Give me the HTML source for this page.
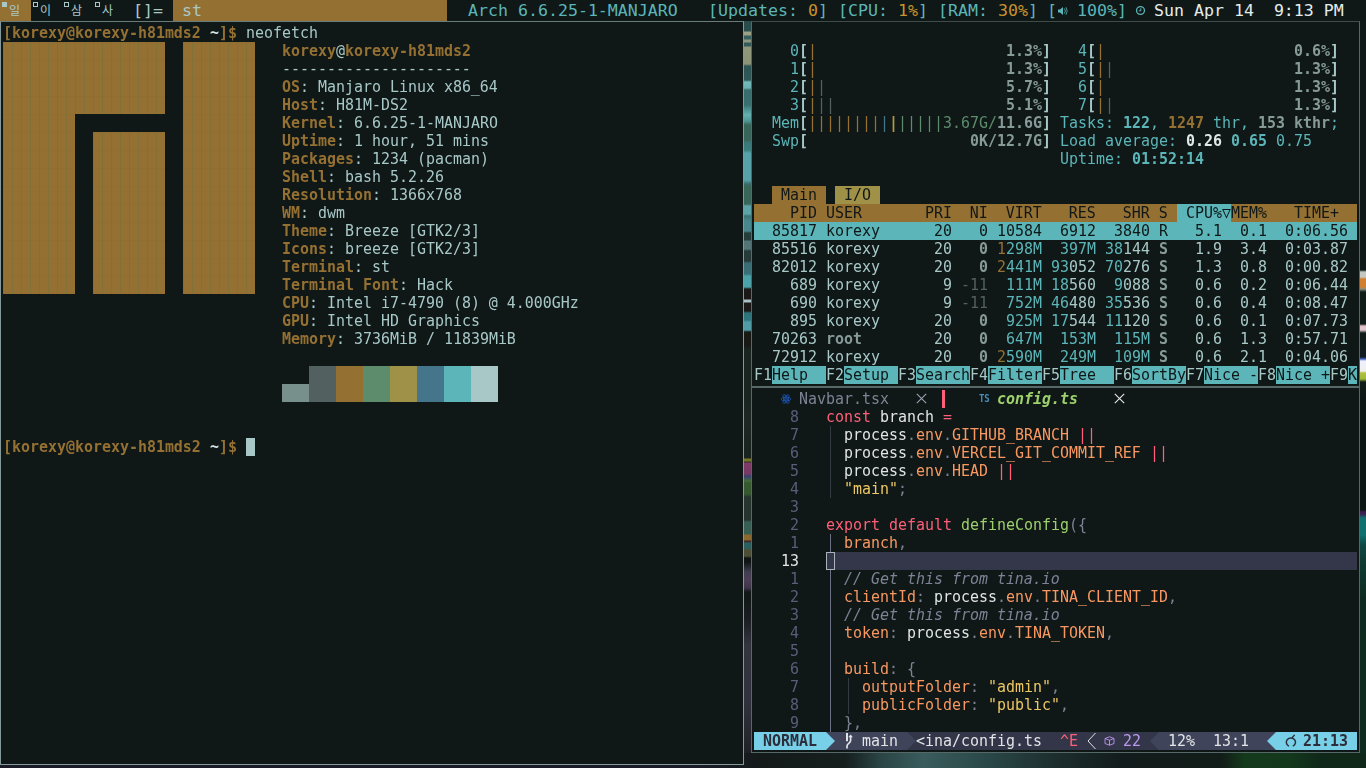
<!DOCTYPE html>
<html lang="en"><head><meta charset="utf-8"><title>dwm</title><style>
html,body{margin:0;padding:0}
body{width:1366px;height:768px;position:relative;overflow:hidden;background:#0f1817}
.b{position:absolute;box-sizing:content-box}
.t{position:absolute;height:18px;line-height:18px;font-family:"DejaVu Sans Mono","Liberation Mono",monospace;font-size:14.95px;white-space:pre;transform:scaleY(1.09);transform-origin:0 14.2px}
.s{position:absolute;top:-.5px;height:21px;line-height:21px;font-family:"DejaVu Sans Mono","Liberation Mono",monospace;font-size:16.6px;white-space:pre}
.k{position:absolute;top:3px;height:16px;line-height:16px;font-family:"Liberation Sans","Noto Sans CJK KR","NanumGothic",sans-serif;font-size:12px;white-space:pre}
.g{background:repeating-linear-gradient(90deg,rgba(70,115,70,.24) 0 1px,transparent 1px 9px),repeating-linear-gradient(180deg,rgba(60,90,60,.05) 0 1px,transparent 1px 18px)}
#wp{left:0;top:0;width:1366px;height:768px;background:#141c1c}
#bar{left:0;top:0;width:1366px;height:21px;background:#0f1817}
#wpgap{left:744px;top:21px;width:7px;height:747px;filter:brightness(.86) saturate(.85);background:linear-gradient(180deg,#2a5a5a 0px,#2a5c5c 10px,#b8bc98 11px,#b0b890 14px,#3a7070 15px,#3a7070 18px,#a0b090 19px,#a0b090 21px,#356a6a 22px,#356a6a 25px,#a8b088 26px,#a4ac84 43px,#2f6464 45px,#2f6868 59px,#7adcdc 61px,#70d0d0 67px,#3a8080 69px,#3a8484 84px,#45a0a0 87px,#6ad0d0 94px,#50b0b0 100px,#3a7868 104px,#3a7868 119px,#3a9090 122px,#3a9494 129px,#58c0c8 132px,#58c0c8 159px,#3a8080 163px,#3a7a68 165px,#3a7a68 183px,#60c0c8 185px,#60c0c8 193px,#3a8888 195px,#4aa0a8 200px,#4aa0a8 210px,#284848 212px,#284848 219px,#5a8888 220px,#5a8888 228px,#2a4444 230px,#2a4444 240px,#3a8088 242px,#3a8490 253px,#48c0c8 255px,#48c0c8 266px,#201c1a 268px,#201c1a 278px,#c0e0e8 279px,#c0e0e8 281px,#201c1a 282px,#201c1a 290px,#2a8890 292px,#2a8c98 299px,#50b8c8 301px,#50b8c8 309px,#1c1c18 311px,#1c1c18 324px,#1c2c28 329px,#1c2c28 379px,#222e2a 400px,#1c2a22 429px,#1c2a22 437px,#8a8a20 438px,#8a8a20 440px,#2a3a28 441px,#a04080 442px,#904078 453px,#404890 455px,#48803a 460px,#3a6a30 462px,#3a6a30 473px,#2a4034 476px,#2a4034 499px,#3a7060 501px,#3a7060 513px,#a87828 514px,#a87828 519px,#502020 520px,#2a7070 522px,#2a7070 527px,#5a5c38 529px,#5a5c38 535px,#101818 537px,#101818 541px,#4a4860 551px,#5a4868 559px,#4a3c58 567px,#141c1c 571px,#141c1c 579px,#20242c 600px,#3c3c4c 624px,#3a3a4a 679px,#2c2c38 719px,#1a1c24 747px)}
#wpright{left:1360px;top:21px;width:6px;height:747px;background:linear-gradient(180deg,#0f1a18 0px,#0f1a18 249px,#c0c8c0 251px,#c8c8c0 256px,#d08030 258px,#d08030 266px,#8a9080 268px,#101c18 271px,#101c18 303px,#e0c0c8 305px,#e0c8d0 309px,#101c18 312px,#101c20 336px,#4060c0 338px,#f0f0ff 340px,#f0f0f0 350px,#b0c040 352px,#a0b838 358px,#101c18 361px,#0c1614 379px,#0c1614 489px,#3a2050 491px,#3a2050 493px,#107070 497px,#107070 514px,#0f4844 524px,#0f3c34 539px,#0f2a20 579px,#0f2a1e 747px)}
#wpbottom{left:0;top:753px;width:1366px;height:15px;background:linear-gradient(90deg,#1a1c28 0px,#1a1c28 700px,#141a1a 760px,#161e1e 845px,#2a4444 880px,#3a5c5c 923px,#2c4a4a 980px,#1c2c2c 1061px,#131c1c 1120px,#121c18 1221px,#143a1c 1245px,#14381c 1290px,#10281a 1320px,#10281a 1366px)}
</style></head><body>
<div class="b" id="wp"></div>
<div class="b" id="wpgap"></div>
<div class="b" id="wpright"></div>
<div class="b" id="wpbottom"></div>
<div class="b" id="bar"></div>
<div class="b" style="left:0px;top:0px;width:31px;height:21px;background:#957033;"></div>
<div class="b" style="left:2px;top:2px;width:5px;height:5px;background:#a8c8c8;"></div>
<div class="b" style="left:33px;top:2px;width:3px;height:3px;border:1px solid #a8c8c8"></div>
<div class="b" style="left:64px;top:2px;width:3px;height:3px;border:1px solid #a8c8c8"></div>
<div class="b" style="left:95px;top:2px;width:3px;height:3px;border:1px solid #a8c8c8"></div>
<span class="k" style="left:9px;color:#a8c8c8">일</span>
<span class="k" style="left:40px;color:#a8c8c8">이</span>
<span class="k" style="left:71px;color:#a8c8c8">삼</span>
<span class="k" style="left:102px;color:#a8c8c8">사</span>
<span class="s" style="left:133px;color:#a8c8c8">[]=</span>
<div class="b" style="left:173px;top:0px;width:274px;height:21px;background:#957033;"></div>
<span class="s" style="left:182px;color:#a8c8c8">st</span>
<span class="s" style="left:468px;color:#5cb5b8">Arch 6.6.25-1-MANJARO</span>
<span class="s" style="left:708px;color:#5cb5b8">[Updates: </span>
<span class="s" style="left:808px;color:#c8922e">0</span>
<span class="s" style="left:818px;color:#5cb5b8">]</span>
<span class="s" style="left:838px;color:#5cb5b8">[CPU: </span>
<span class="s" style="left:898px;color:#c8922e">1%</span>
<span class="s" style="left:918px;color:#5cb5b8">]</span>
<span class="s" style="left:938px;color:#5cb5b8">[RAM: </span>
<span class="s" style="left:998px;color:#c8922e">30%</span>
<span class="s" style="left:1028px;color:#5cb5b8">]</span>
<span class="s" style="left:1047px;color:#5cb5b8">[</span>
<svg class="b" style="left:1057px;top:5px" width="11" height="12" viewBox="0 0 11 12"><path d="M1 4.5h2l3-2.5v8l-3-2.5h-2z" fill="#5cb5b8"/><path d="M7.5 3.5q1.6 2.5 0 5M9 2.2q2.4 3.8 0 7.6" stroke="#5cb5b8" stroke-width="1" fill="none" opacity=".8"/></svg>
<span class="s" style="left:1077px;color:#5cb5b8">100%]</span>
<svg class="b" style="left:1134.5px;top:5.3px" width="11" height="11" viewBox="0 0 11 11"><circle cx="5.5" cy="5.5" r="3.950" stroke="#5cb5b8" stroke-width="1.3" fill="none"/><path d="M5.800 3.200v2.600h-2" stroke="#5cb5b8" stroke-width="1" fill="none"/></svg>
<span class="s" style="left:1154px;color:#e4ecec">Sun Apr 14  9:13 PM</span>
<div class="b" style="left:0px;top:21px;width:742px;height:742px;border:1px solid #86999a;border-top-color:#687c7c;background:#0f1817"></div>
<div class="b" style="left:751px;top:21px;width:607px;height:364px;border:1px solid #566868;border-top-color:#3e4c4c;background:#0f1817"></div>
<div class="b" style="left:751px;top:387px;width:607px;height:364px;border:1px solid #566868;border-top-color:#566868;background:#0f1817"></div>
<span class="t" style="left:3px;top:24px;color:#957033;font-weight:bold;">[korexy@korexy-h81mds2</span>
<span class="t" style="left:210px;top:24px;color:#d4e4e4;font-weight:bold;">~</span>
<span class="t" style="left:219px;top:24px;color:#957033;font-weight:bold;">]$</span>
<span class="t" style="left:246px;top:24px;color:#a8c8c8;">neofetch</span>
<div class="b" style="left:3px;top:42px;width:162px;height:18px;background:#957033;"></div>
<span class="t" style="left:3px;top:42px;color:#957033;transform:none;overflow:hidden;">██████████████████</span>
<div class="b" style="left:183px;top:42px;width:72px;height:18px;background:#957033;"></div>
<span class="t" style="left:183px;top:42px;color:#957033;transform:none;overflow:hidden;">████████</span>
<div class="b" style="left:3px;top:60px;width:162px;height:18px;background:#957033;"></div>
<span class="t" style="left:3px;top:60px;color:#957033;transform:none;overflow:hidden;">██████████████████</span>
<div class="b" style="left:183px;top:60px;width:72px;height:18px;background:#957033;"></div>
<span class="t" style="left:183px;top:60px;color:#957033;transform:none;overflow:hidden;">████████</span>
<div class="b" style="left:3px;top:78px;width:162px;height:18px;background:#957033;"></div>
<span class="t" style="left:3px;top:78px;color:#957033;transform:none;overflow:hidden;">██████████████████</span>
<div class="b" style="left:183px;top:78px;width:72px;height:18px;background:#957033;"></div>
<span class="t" style="left:183px;top:78px;color:#957033;transform:none;overflow:hidden;">████████</span>
<div class="b" style="left:3px;top:96px;width:162px;height:18px;background:#957033;"></div>
<span class="t" style="left:3px;top:96px;color:#957033;transform:none;overflow:hidden;">██████████████████</span>
<div class="b" style="left:183px;top:96px;width:72px;height:18px;background:#957033;"></div>
<span class="t" style="left:183px;top:96px;color:#957033;transform:none;overflow:hidden;">████████</span>
<div class="b" style="left:3px;top:114px;width:72px;height:18px;background:#957033;"></div>
<span class="t" style="left:3px;top:114px;color:#957033;transform:none;overflow:hidden;">████████</span>
<div class="b" style="left:183px;top:114px;width:72px;height:18px;background:#957033;"></div>
<span class="t" style="left:183px;top:114px;color:#957033;transform:none;overflow:hidden;">████████</span>
<div class="b" style="left:3px;top:132px;width:72px;height:18px;background:#957033;"></div>
<span class="t" style="left:3px;top:132px;color:#957033;transform:none;overflow:hidden;">████████</span>
<div class="b" style="left:93px;top:132px;width:72px;height:18px;background:#957033;"></div>
<span class="t" style="left:93px;top:132px;color:#957033;transform:none;overflow:hidden;">████████</span>
<div class="b" style="left:183px;top:132px;width:72px;height:18px;background:#957033;"></div>
<span class="t" style="left:183px;top:132px;color:#957033;transform:none;overflow:hidden;">████████</span>
<div class="b" style="left:3px;top:150px;width:72px;height:18px;background:#957033;"></div>
<span class="t" style="left:3px;top:150px;color:#957033;transform:none;overflow:hidden;">████████</span>
<div class="b" style="left:93px;top:150px;width:72px;height:18px;background:#957033;"></div>
<span class="t" style="left:93px;top:150px;color:#957033;transform:none;overflow:hidden;">████████</span>
<div class="b" style="left:183px;top:150px;width:72px;height:18px;background:#957033;"></div>
<span class="t" style="left:183px;top:150px;color:#957033;transform:none;overflow:hidden;">████████</span>
<div class="b" style="left:3px;top:168px;width:72px;height:18px;background:#957033;"></div>
<span class="t" style="left:3px;top:168px;color:#957033;transform:none;overflow:hidden;">████████</span>
<div class="b" style="left:93px;top:168px;width:72px;height:18px;background:#957033;"></div>
<span class="t" style="left:93px;top:168px;color:#957033;transform:none;overflow:hidden;">████████</span>
<div class="b" style="left:183px;top:168px;width:72px;height:18px;background:#957033;"></div>
<span class="t" style="left:183px;top:168px;color:#957033;transform:none;overflow:hidden;">████████</span>
<div class="b" style="left:3px;top:186px;width:72px;height:18px;background:#957033;"></div>
<span class="t" style="left:3px;top:186px;color:#957033;transform:none;overflow:hidden;">████████</span>
<div class="b" style="left:93px;top:186px;width:72px;height:18px;background:#957033;"></div>
<span class="t" style="left:93px;top:186px;color:#957033;transform:none;overflow:hidden;">████████</span>
<div class="b" style="left:183px;top:186px;width:72px;height:18px;background:#957033;"></div>
<span class="t" style="left:183px;top:186px;color:#957033;transform:none;overflow:hidden;">████████</span>
<div class="b" style="left:3px;top:204px;width:72px;height:18px;background:#957033;"></div>
<span class="t" style="left:3px;top:204px;color:#957033;transform:none;overflow:hidden;">████████</span>
<div class="b" style="left:93px;top:204px;width:72px;height:18px;background:#957033;"></div>
<span class="t" style="left:93px;top:204px;color:#957033;transform:none;overflow:hidden;">████████</span>
<div class="b" style="left:183px;top:204px;width:72px;height:18px;background:#957033;"></div>
<span class="t" style="left:183px;top:204px;color:#957033;transform:none;overflow:hidden;">████████</span>
<div class="b" style="left:3px;top:222px;width:72px;height:18px;background:#957033;"></div>
<span class="t" style="left:3px;top:222px;color:#957033;transform:none;overflow:hidden;">████████</span>
<div class="b" style="left:93px;top:222px;width:72px;height:18px;background:#957033;"></div>
<span class="t" style="left:93px;top:222px;color:#957033;transform:none;overflow:hidden;">████████</span>
<div class="b" style="left:183px;top:222px;width:72px;height:18px;background:#957033;"></div>
<span class="t" style="left:183px;top:222px;color:#957033;transform:none;overflow:hidden;">████████</span>
<div class="b" style="left:3px;top:240px;width:72px;height:18px;background:#957033;"></div>
<span class="t" style="left:3px;top:240px;color:#957033;transform:none;overflow:hidden;">████████</span>
<div class="b" style="left:93px;top:240px;width:72px;height:18px;background:#957033;"></div>
<span class="t" style="left:93px;top:240px;color:#957033;transform:none;overflow:hidden;">████████</span>
<div class="b" style="left:183px;top:240px;width:72px;height:18px;background:#957033;"></div>
<span class="t" style="left:183px;top:240px;color:#957033;transform:none;overflow:hidden;">████████</span>
<div class="b" style="left:3px;top:258px;width:72px;height:18px;background:#957033;"></div>
<span class="t" style="left:3px;top:258px;color:#957033;transform:none;overflow:hidden;">████████</span>
<div class="b" style="left:93px;top:258px;width:72px;height:18px;background:#957033;"></div>
<span class="t" style="left:93px;top:258px;color:#957033;transform:none;overflow:hidden;">████████</span>
<div class="b" style="left:183px;top:258px;width:72px;height:18px;background:#957033;"></div>
<span class="t" style="left:183px;top:258px;color:#957033;transform:none;overflow:hidden;">████████</span>
<div class="b" style="left:3px;top:276px;width:72px;height:18px;background:#957033;"></div>
<span class="t" style="left:3px;top:276px;color:#957033;transform:none;overflow:hidden;">████████</span>
<div class="b" style="left:93px;top:276px;width:72px;height:18px;background:#957033;"></div>
<span class="t" style="left:93px;top:276px;color:#957033;transform:none;overflow:hidden;">████████</span>
<div class="b" style="left:183px;top:276px;width:72px;height:18px;background:#957033;"></div>
<span class="t" style="left:183px;top:276px;color:#957033;transform:none;overflow:hidden;">████████</span>
<div class="b g" style="left:3px;top:42px;width:162px;height:72px"></div>
<div class="b g" style="left:3px;top:114px;width:72px;height:180px"></div>
<div class="b g" style="left:93px;top:132px;width:72px;height:162px"></div>
<div class="b g" style="left:183px;top:42px;width:72px;height:252px"></div>
<span class="t" style="left:282px;top:42px;color:#957033;font-weight:bold;">korexy</span>
<span class="t" style="left:336px;top:42px;color:#a8c8c8;">@</span>
<span class="t" style="left:345px;top:42px;color:#957033;font-weight:bold;">korexy-h81mds2</span>
<span class="t" style="left:282px;top:60px;color:#a8c8c8;">---------------------</span>
<span class="t" style="left:282px;top:78px;color:#957033;font-weight:bold;">OS</span>
<span class="t" style="left:300px;top:78px;color:#a8c8c8;">: Manjaro Linux x86_64</span>
<span class="t" style="left:282px;top:96px;color:#957033;font-weight:bold;">Host</span>
<span class="t" style="left:318px;top:96px;color:#a8c8c8;">: H81M-DS2</span>
<span class="t" style="left:282px;top:114px;color:#957033;font-weight:bold;">Kernel</span>
<span class="t" style="left:336px;top:114px;color:#a8c8c8;">: 6.6.25-1-MANJARO</span>
<span class="t" style="left:282px;top:132px;color:#957033;font-weight:bold;">Uptime</span>
<span class="t" style="left:336px;top:132px;color:#a8c8c8;">: 1 hour, 51 mins</span>
<span class="t" style="left:282px;top:150px;color:#957033;font-weight:bold;">Packages</span>
<span class="t" style="left:354px;top:150px;color:#a8c8c8;">: 1234 (pacman)</span>
<span class="t" style="left:282px;top:168px;color:#957033;font-weight:bold;">Shell</span>
<span class="t" style="left:327px;top:168px;color:#a8c8c8;">: bash 5.2.26</span>
<span class="t" style="left:282px;top:186px;color:#957033;font-weight:bold;">Resolution</span>
<span class="t" style="left:372px;top:186px;color:#a8c8c8;">: 1366x768</span>
<span class="t" style="left:282px;top:204px;color:#957033;font-weight:bold;">WM</span>
<span class="t" style="left:300px;top:204px;color:#a8c8c8;">: dwm</span>
<span class="t" style="left:282px;top:222px;color:#957033;font-weight:bold;">Theme</span>
<span class="t" style="left:327px;top:222px;color:#a8c8c8;">: Breeze [GTK2/3]</span>
<span class="t" style="left:282px;top:240px;color:#957033;font-weight:bold;">Icons</span>
<span class="t" style="left:327px;top:240px;color:#a8c8c8;">: breeze [GTK2/3]</span>
<span class="t" style="left:282px;top:258px;color:#957033;font-weight:bold;">Terminal</span>
<span class="t" style="left:354px;top:258px;color:#a8c8c8;">: st</span>
<span class="t" style="left:282px;top:276px;color:#957033;font-weight:bold;">Terminal Font</span>
<span class="t" style="left:399px;top:276px;color:#a8c8c8;">: Hack</span>
<span class="t" style="left:282px;top:294px;color:#957033;font-weight:bold;">CPU</span>
<span class="t" style="left:309px;top:294px;color:#a8c8c8;">: Intel i7-4790 (8) @ 4.000GHz</span>
<span class="t" style="left:282px;top:312px;color:#957033;font-weight:bold;">GPU</span>
<span class="t" style="left:309px;top:312px;color:#a8c8c8;">: Intel HD Graphics</span>
<span class="t" style="left:282px;top:330px;color:#957033;font-weight:bold;">Memory</span>
<span class="t" style="left:336px;top:330px;color:#a8c8c8;">: 3736MiB / 11839MiB</span>
<div class="b" style="left:309px;top:366px;width:27px;height:36px;background:#52605f;"></div>
<div class="b" style="left:336px;top:366px;width:27px;height:36px;background:#957033;"></div>
<div class="b" style="left:363px;top:366px;width:27px;height:36px;background:#5c8c6c;"></div>
<div class="b" style="left:390px;top:366px;width:27px;height:36px;background:#a09148;"></div>
<div class="b" style="left:417px;top:366px;width:27px;height:36px;background:#44758a;"></div>
<div class="b" style="left:444px;top:366px;width:27px;height:36px;background:#5cb5b8;"></div>
<div class="b" style="left:471px;top:366px;width:27px;height:36px;background:#a8c8c8;"></div>
<div class="b" style="left:282px;top:384px;width:27px;height:18px;background:#78908c;"></div>
<span class="t" style="left:3px;top:438px;color:#957033;font-weight:bold;">[korexy@korexy-h81mds2</span>
<span class="t" style="left:210px;top:438px;color:#d4e4e4;font-weight:bold;">~</span>
<span class="t" style="left:219px;top:438px;color:#957033;font-weight:bold;">]$</span>
<div class="b" style="left:246px;top:438px;width:9px;height:18px;background:#a8c8c8;"></div>
<span class="t" style="left:790px;top:42px;color:#5cb5b8;">0</span>
<span class="t" style="left:799px;top:42px;color:#a8c8c8;font-weight:bold;">[</span>
<span class="t" style="left:808px;top:42px;color:#957033;">|</span>
<span class="t" style="left:1006px;top:42px;color:#869a98;font-weight:bold;">1.3%</span>
<span class="t" style="left:1042px;top:42px;color:#a8c8c8;font-weight:bold;">]</span>
<span class="t" style="left:790px;top:60px;color:#5cb5b8;">1</span>
<span class="t" style="left:799px;top:60px;color:#a8c8c8;font-weight:bold;">[</span>
<span class="t" style="left:808px;top:60px;color:#957033;">|</span>
<span class="t" style="left:1006px;top:60px;color:#869a98;font-weight:bold;">1.3%</span>
<span class="t" style="left:1042px;top:60px;color:#a8c8c8;font-weight:bold;">]</span>
<span class="t" style="left:790px;top:78px;color:#5cb5b8;">2</span>
<span class="t" style="left:799px;top:78px;color:#a8c8c8;font-weight:bold;">[</span>
<span class="t" style="left:808px;top:78px;color:#957033;">|</span>
<span class="t" style="left:817px;top:78px;color:#52605f;">|</span>
<span class="t" style="left:1006px;top:78px;color:#869a98;font-weight:bold;">5.7%</span>
<span class="t" style="left:1042px;top:78px;color:#a8c8c8;font-weight:bold;">]</span>
<span class="t" style="left:790px;top:96px;color:#5cb5b8;">3</span>
<span class="t" style="left:799px;top:96px;color:#a8c8c8;font-weight:bold;">[</span>
<span class="t" style="left:808px;top:96px;color:#957033;">|</span>
<span class="t" style="left:817px;top:96px;color:#52605f;">|</span>
<span class="t" style="left:826px;top:96px;color:#52605f;">|</span>
<span class="t" style="left:1006px;top:96px;color:#869a98;font-weight:bold;">5.1%</span>
<span class="t" style="left:1042px;top:96px;color:#a8c8c8;font-weight:bold;">]</span>
<span class="t" style="left:1078px;top:42px;color:#5cb5b8;">4</span>
<span class="t" style="left:1087px;top:42px;color:#a8c8c8;font-weight:bold;">[</span>
<span class="t" style="left:1096px;top:42px;color:#957033;">|</span>
<span class="t" style="left:1294px;top:42px;color:#869a98;font-weight:bold;">0.6%</span>
<span class="t" style="left:1330px;top:42px;color:#a8c8c8;font-weight:bold;">]</span>
<span class="t" style="left:1078px;top:60px;color:#5cb5b8;">5</span>
<span class="t" style="left:1087px;top:60px;color:#a8c8c8;font-weight:bold;">[</span>
<span class="t" style="left:1096px;top:60px;color:#957033;">|</span>
<span class="t" style="left:1105px;top:60px;color:#52605f;">|</span>
<span class="t" style="left:1294px;top:60px;color:#869a98;font-weight:bold;">1.3%</span>
<span class="t" style="left:1330px;top:60px;color:#a8c8c8;font-weight:bold;">]</span>
<span class="t" style="left:1078px;top:78px;color:#5cb5b8;">6</span>
<span class="t" style="left:1087px;top:78px;color:#a8c8c8;font-weight:bold;">[</span>
<span class="t" style="left:1096px;top:78px;color:#957033;">|</span>
<span class="t" style="left:1294px;top:78px;color:#869a98;font-weight:bold;">1.3%</span>
<span class="t" style="left:1330px;top:78px;color:#a8c8c8;font-weight:bold;">]</span>
<span class="t" style="left:1078px;top:96px;color:#5cb5b8;">7</span>
<span class="t" style="left:1087px;top:96px;color:#a8c8c8;font-weight:bold;">[</span>
<span class="t" style="left:1096px;top:96px;color:#957033;">|</span>
<span class="t" style="left:1105px;top:96px;color:#52605f;">|</span>
<span class="t" style="left:1294px;top:96px;color:#869a98;font-weight:bold;">1.3%</span>
<span class="t" style="left:1330px;top:96px;color:#a8c8c8;font-weight:bold;">]</span>
<span class="t" style="left:772px;top:114px;color:#5cb5b8;">Mem</span>
<span class="t" style="left:799px;top:114px;color:#a8c8c8;font-weight:bold;">[</span>
<span class="t" style="left:808px;top:114px;color:#957033;">||||||||</span>
<span class="t" style="left:880px;top:114px;color:#44758a;">|</span>
<span class="t" style="left:889px;top:114px;color:#b09a40;font-weight:bold;">|</span>
<span class="t" style="left:898px;top:114px;color:#5c8c6c;">|||||</span>
<span class="t" style="left:943px;top:114px;color:#5c8c6c;">3.67G/</span>
<span class="t" style="left:997px;top:114px;color:#869a98;font-weight:bold;">11.6G</span>
<span class="t" style="left:1042px;top:114px;color:#a8c8c8;font-weight:bold;">]</span>
<span class="t" style="left:772px;top:132px;color:#5cb5b8;">Swp</span>
<span class="t" style="left:799px;top:132px;color:#a8c8c8;font-weight:bold;">[</span>
<span class="t" style="left:970px;top:132px;color:#869a98;font-weight:bold;">0K/12.7G</span>
<span class="t" style="left:1042px;top:132px;color:#a8c8c8;font-weight:bold;">]</span>
<span class="t" style="left:1060px;top:114px;color:#5cb5b8;">Tasks:</span>
<span class="t" style="left:1123px;top:114px;color:#5cb5b8;font-weight:bold;">122</span>
<span class="t" style="left:1150px;top:114px;color:#5cb5b8;">,</span>
<span class="t" style="left:1168px;top:114px;color:#957033;font-weight:bold;">1247</span>
<span class="t" style="left:1213px;top:114px;color:#5cb5b8;">thr,</span>
<span class="t" style="left:1258px;top:114px;color:#869a98;font-weight:bold;">153</span>
<span class="t" style="left:1294px;top:114px;color:#869a98;font-weight:bold;">kthr</span>
<span class="t" style="left:1330px;top:114px;color:#5cb5b8;">;</span>
<span class="t" style="left:1060px;top:132px;color:#5cb5b8;">Load average:</span>
<span class="t" style="left:1186px;top:132px;color:#dfe8e8;font-weight:bold;">0.26</span>
<span class="t" style="left:1231px;top:132px;color:#5cb5b8;font-weight:bold;">0.65</span>
<span class="t" style="left:1276px;top:132px;color:#5cb5b8;">0.75</span>
<span class="t" style="left:1060px;top:150px;color:#5cb5b8;">Uptime:</span>
<span class="t" style="left:1132px;top:150px;color:#5cb5b8;font-weight:bold;">01:52:14</span>
<div class="b" style="left:772px;top:186px;width:54px;height:18px;background:#957033;"></div>
<span class="t" style="left:781px;top:186px;color:#0f1817;">Main</span>
<div class="b" style="left:835px;top:186px;width:45px;height:18px;background:#a09148;"></div>
<span class="t" style="left:844px;top:186px;color:#0f1817;">I/O</span>
<div class="b" style="left:754px;top:204px;width:603px;height:18px;background:#957033;"></div>
<span class="t" style="left:790px;top:204px;color:#0f1817;">PID USER       PRI  NI  VIRT   RES   SHR S</span>
<div class="b" style="left:1177px;top:204px;width:54px;height:18px;background:#5cb5b8;"></div>
<span class="t" style="left:1186px;top:204px;color:#0f1817;">CPU%▽</span>
<span class="t" style="left:1231px;top:204px;color:#0f1817;">MEM%   TIME+</span>
<div class="b" style="left:754px;top:222px;width:603px;height:18px;background:#5cb5b8;"></div>
<span class="t" style="left:772px;top:222px;color:#0f1817;">85817</span>
<span class="t" style="left:826px;top:222px;color:#0f1817;">korexy</span>
<span class="t" style="left:934px;top:222px;color:#0f1817;">20</span>
<span class="t" style="left:979px;top:222px;color:#0f1817;">0</span>
<span class="t" style="left:997px;top:222px;color:#0f1817;">10584</span>
<span class="t" style="left:1060px;top:222px;color:#0f1817;">6912</span>
<span class="t" style="left:1114px;top:222px;color:#0f1817;">3840</span>
<span class="t" style="left:1159px;top:222px;color:#0f1817;">R</span>
<span class="t" style="left:1195px;top:222px;color:#0f1817;">5.1</span>
<span class="t" style="left:1240px;top:222px;color:#0f1817;">0.1</span>
<span class="t" style="left:1285px;top:222px;color:#0f1817;">0:06.56</span>
<span class="t" style="left:772px;top:240px;color:#a8c8c8;">85516</span>
<span class="t" style="left:826px;top:240px;color:#a8c8c8;">korexy</span>
<span class="t" style="left:934px;top:240px;color:#a8c8c8;">20</span>
<span class="t" style="left:979px;top:240px;color:#869a98;font-weight:bold;">0</span>
<span class="t" style="left:997px;top:240px;color:#957033;">1</span>
<span class="t" style="left:1006px;top:240px;color:#5cb5b8;">298M</span>
<span class="t" style="left:1060px;top:240px;color:#5cb5b8;">397M</span>
<span class="t" style="left:1105px;top:240px;color:#5cb5b8;">38</span>
<span class="t" style="left:1123px;top:240px;color:#a8c8c8;">144</span>
<span class="t" style="left:1159px;top:240px;color:#869a98;font-weight:bold;">S</span>
<span class="t" style="left:1195px;top:240px;color:#a8c8c8;">1.9</span>
<span class="t" style="left:1240px;top:240px;color:#a8c8c8;">3.4</span>
<span class="t" style="left:1285px;top:240px;color:#a8c8c8;">0:03.87</span>
<span class="t" style="left:772px;top:258px;color:#a8c8c8;">82012</span>
<span class="t" style="left:826px;top:258px;color:#a8c8c8;">korexy</span>
<span class="t" style="left:934px;top:258px;color:#a8c8c8;">20</span>
<span class="t" style="left:979px;top:258px;color:#869a98;font-weight:bold;">0</span>
<span class="t" style="left:997px;top:258px;color:#957033;">2</span>
<span class="t" style="left:1006px;top:258px;color:#5cb5b8;">441M</span>
<span class="t" style="left:1051px;top:258px;color:#5cb5b8;">93</span>
<span class="t" style="left:1069px;top:258px;color:#a8c8c8;">052</span>
<span class="t" style="left:1105px;top:258px;color:#5cb5b8;">70</span>
<span class="t" style="left:1123px;top:258px;color:#a8c8c8;">276</span>
<span class="t" style="left:1159px;top:258px;color:#869a98;font-weight:bold;">S</span>
<span class="t" style="left:1195px;top:258px;color:#a8c8c8;">1.3</span>
<span class="t" style="left:1240px;top:258px;color:#a8c8c8;">0.8</span>
<span class="t" style="left:1285px;top:258px;color:#a8c8c8;">0:00.82</span>
<span class="t" style="left:790px;top:276px;color:#a8c8c8;">689</span>
<span class="t" style="left:826px;top:276px;color:#a8c8c8;">korexy</span>
<span class="t" style="left:943px;top:276px;color:#a8c8c8;">9</span>
<span class="t" style="left:961px;top:276px;color:#52605f;">-11</span>
<span class="t" style="left:1006px;top:276px;color:#5cb5b8;">111M</span>
<span class="t" style="left:1051px;top:276px;color:#5cb5b8;">18</span>
<span class="t" style="left:1069px;top:276px;color:#a8c8c8;">560</span>
<span class="t" style="left:1114px;top:276px;color:#5cb5b8;">9</span>
<span class="t" style="left:1123px;top:276px;color:#a8c8c8;">088</span>
<span class="t" style="left:1159px;top:276px;color:#869a98;font-weight:bold;">S</span>
<span class="t" style="left:1195px;top:276px;color:#a8c8c8;">0.6</span>
<span class="t" style="left:1240px;top:276px;color:#a8c8c8;">0.2</span>
<span class="t" style="left:1285px;top:276px;color:#a8c8c8;">0:06.44</span>
<span class="t" style="left:790px;top:294px;color:#a8c8c8;">690</span>
<span class="t" style="left:826px;top:294px;color:#a8c8c8;">korexy</span>
<span class="t" style="left:943px;top:294px;color:#a8c8c8;">9</span>
<span class="t" style="left:961px;top:294px;color:#52605f;">-11</span>
<span class="t" style="left:1006px;top:294px;color:#5cb5b8;">752M</span>
<span class="t" style="left:1051px;top:294px;color:#5cb5b8;">46</span>
<span class="t" style="left:1069px;top:294px;color:#a8c8c8;">480</span>
<span class="t" style="left:1105px;top:294px;color:#5cb5b8;">35</span>
<span class="t" style="left:1123px;top:294px;color:#a8c8c8;">536</span>
<span class="t" style="left:1159px;top:294px;color:#869a98;font-weight:bold;">S</span>
<span class="t" style="left:1195px;top:294px;color:#a8c8c8;">0.6</span>
<span class="t" style="left:1240px;top:294px;color:#a8c8c8;">0.4</span>
<span class="t" style="left:1285px;top:294px;color:#a8c8c8;">0:08.47</span>
<span class="t" style="left:790px;top:312px;color:#a8c8c8;">895</span>
<span class="t" style="left:826px;top:312px;color:#a8c8c8;">korexy</span>
<span class="t" style="left:934px;top:312px;color:#a8c8c8;">20</span>
<span class="t" style="left:979px;top:312px;color:#869a98;font-weight:bold;">0</span>
<span class="t" style="left:1006px;top:312px;color:#5cb5b8;">925M</span>
<span class="t" style="left:1051px;top:312px;color:#5cb5b8;">17</span>
<span class="t" style="left:1069px;top:312px;color:#a8c8c8;">544</span>
<span class="t" style="left:1105px;top:312px;color:#5cb5b8;">11</span>
<span class="t" style="left:1123px;top:312px;color:#a8c8c8;">120</span>
<span class="t" style="left:1159px;top:312px;color:#869a98;font-weight:bold;">S</span>
<span class="t" style="left:1195px;top:312px;color:#a8c8c8;">0.6</span>
<span class="t" style="left:1240px;top:312px;color:#a8c8c8;">0.1</span>
<span class="t" style="left:1285px;top:312px;color:#a8c8c8;">0:07.73</span>
<span class="t" style="left:772px;top:330px;color:#a8c8c8;">70263</span>
<span class="t" style="left:826px;top:330px;color:#869a98;font-weight:bold;">root</span>
<span class="t" style="left:934px;top:330px;color:#a8c8c8;">20</span>
<span class="t" style="left:979px;top:330px;color:#869a98;font-weight:bold;">0</span>
<span class="t" style="left:1006px;top:330px;color:#5cb5b8;">647M</span>
<span class="t" style="left:1060px;top:330px;color:#5cb5b8;">153M</span>
<span class="t" style="left:1114px;top:330px;color:#5cb5b8;">115M</span>
<span class="t" style="left:1159px;top:330px;color:#869a98;font-weight:bold;">S</span>
<span class="t" style="left:1195px;top:330px;color:#a8c8c8;">0.6</span>
<span class="t" style="left:1240px;top:330px;color:#a8c8c8;">1.3</span>
<span class="t" style="left:1285px;top:330px;color:#a8c8c8;">0:57.71</span>
<span class="t" style="left:772px;top:348px;color:#a8c8c8;">72912</span>
<span class="t" style="left:826px;top:348px;color:#a8c8c8;">korexy</span>
<span class="t" style="left:934px;top:348px;color:#a8c8c8;">20</span>
<span class="t" style="left:979px;top:348px;color:#869a98;font-weight:bold;">0</span>
<span class="t" style="left:997px;top:348px;color:#957033;">2</span>
<span class="t" style="left:1006px;top:348px;color:#5cb5b8;">590M</span>
<span class="t" style="left:1060px;top:348px;color:#5cb5b8;">249M</span>
<span class="t" style="left:1114px;top:348px;color:#5cb5b8;">109M</span>
<span class="t" style="left:1159px;top:348px;color:#869a98;font-weight:bold;">S</span>
<span class="t" style="left:1195px;top:348px;color:#a8c8c8;">0.6</span>
<span class="t" style="left:1240px;top:348px;color:#a8c8c8;">2.1</span>
<span class="t" style="left:1285px;top:348px;color:#a8c8c8;">0:04.06</span>
<span class="t" style="left:754px;top:366px;color:#a8c8c8;">F1</span>
<div class="b" style="left:772px;top:366px;width:54px;height:18px;background:#5cb5b8;"></div>
<span class="t" style="left:772px;top:366px;color:#0f1817;">Help</span>
<span class="t" style="left:826px;top:366px;color:#a8c8c8;">F2</span>
<div class="b" style="left:844px;top:366px;width:54px;height:18px;background:#5cb5b8;"></div>
<span class="t" style="left:844px;top:366px;color:#0f1817;">Setup</span>
<span class="t" style="left:898px;top:366px;color:#a8c8c8;">F3</span>
<div class="b" style="left:916px;top:366px;width:54px;height:18px;background:#5cb5b8;"></div>
<span class="t" style="left:916px;top:366px;color:#0f1817;">Search</span>
<span class="t" style="left:970px;top:366px;color:#a8c8c8;">F4</span>
<div class="b" style="left:988px;top:366px;width:54px;height:18px;background:#5cb5b8;"></div>
<span class="t" style="left:988px;top:366px;color:#0f1817;">Filter</span>
<span class="t" style="left:1042px;top:366px;color:#a8c8c8;">F5</span>
<div class="b" style="left:1060px;top:366px;width:54px;height:18px;background:#5cb5b8;"></div>
<span class="t" style="left:1060px;top:366px;color:#0f1817;">Tree</span>
<span class="t" style="left:1114px;top:366px;color:#a8c8c8;">F6</span>
<div class="b" style="left:1132px;top:366px;width:54px;height:18px;background:#5cb5b8;"></div>
<span class="t" style="left:1132px;top:366px;color:#0f1817;">SortBy</span>
<span class="t" style="left:1186px;top:366px;color:#a8c8c8;">F7</span>
<div class="b" style="left:1204px;top:366px;width:54px;height:18px;background:#5cb5b8;"></div>
<span class="t" style="left:1204px;top:366px;color:#0f1817;">Nice -</span>
<span class="t" style="left:1258px;top:366px;color:#a8c8c8;">F8</span>
<div class="b" style="left:1276px;top:366px;width:54px;height:18px;background:#5cb5b8;"></div>
<span class="t" style="left:1276px;top:366px;color:#0f1817;">Nice +</span>
<span class="t" style="left:1330px;top:366px;color:#a8c8c8;">F9</span>
<div class="b" style="left:1348px;top:366px;width:9px;height:18px;background:#5cb5b8;"></div>
<span class="t" style="left:1348px;top:366px;color:#0f1817;">K</span>
<svg class="b" style="left:780px;top:393px" width="12" height="12" viewBox="0 0 12 12" fill="none" stroke="#1d58bd" stroke-width=".75"><ellipse cx="6" cy="6" rx="4.900" ry="1.850"/><ellipse cx="6" cy="6" rx="4.900" ry="1.850" transform="rotate(60 6 6)"/><ellipse cx="6" cy="6" rx="4.900" ry="1.850" transform="rotate(120 6 6)"/><circle cx="6" cy="6" r=".8" fill="#2a6ad8" stroke="none"/></svg>
<span class="t" style="left:799px;top:390px;color:#7e8294;">Navbar.tsx</span>
<svg class="b" style="left:916px;top:393px" width="11" height="11" viewBox="0 0 11 11"><path d="M.8 .8l9.4 9.4M10.2 .8L.8 10.2" stroke="#9aa0b0" stroke-width="1.1"/></svg>
<svg class="b" style="left:1114px;top:393px" width="11" height="11" viewBox="0 0 11 11"><path d="M.8 .8l9.4 9.4M10.2 .8L.8 10.2" stroke="#e8e8e8" stroke-width="1.1"/></svg>
<div class="b" style="left:942px;top:390px;width:3px;height:18px;background:#ff5f78;"></div>
<span class="t" style="left:979px;top:390px;color:#4a90be;font-size:9px;font-weight:bold;letter-spacing:-.2px">TS</span>
<span class="t" style="left:997px;top:390px;color:#9ed06c;font-weight:bold;font-style:italic;">config.ts</span>
<span class="t" style="left:790px;top:408px;color:#5a5e7a;">8</span>
<span class="t" style="left:826px;top:408px;color:#ff5f78;">const</span>
<span class="t" style="left:880px;top:408px;color:#e1e3e4;">branch</span>
<span class="t" style="left:943px;top:408px;color:#ff5f78;">=</span>
<span class="t" style="left:790px;top:426px;color:#5a5e7a;">7</span>
<div class="b" style="left:830px;top:426px;width:1px;height:18px;background:#353b45;"></div>
<span class="t" style="left:844px;top:426px;color:#e1e3e4;">process</span>
<span class="t" style="left:907px;top:426px;color:#7e8294;">.</span>
<span class="t" style="left:916px;top:426px;color:#f89860;">env</span>
<span class="t" style="left:943px;top:426px;color:#7e8294;">.</span>
<span class="t" style="left:952px;top:426px;color:#f89860;">GITHUB_BRANCH</span>
<span class="t" style="left:1078px;top:426px;color:#ff5f78;">||</span>
<span class="t" style="left:790px;top:444px;color:#5a5e7a;">6</span>
<div class="b" style="left:830px;top:444px;width:1px;height:18px;background:#353b45;"></div>
<span class="t" style="left:844px;top:444px;color:#e1e3e4;">process</span>
<span class="t" style="left:907px;top:444px;color:#7e8294;">.</span>
<span class="t" style="left:916px;top:444px;color:#f89860;">env</span>
<span class="t" style="left:943px;top:444px;color:#7e8294;">.</span>
<span class="t" style="left:952px;top:444px;color:#f89860;">VERCEL_GIT_COMMIT_REF</span>
<span class="t" style="left:1150px;top:444px;color:#ff5f78;">||</span>
<span class="t" style="left:790px;top:462px;color:#5a5e7a;">5</span>
<div class="b" style="left:830px;top:462px;width:1px;height:18px;background:#353b45;"></div>
<span class="t" style="left:844px;top:462px;color:#e1e3e4;">process</span>
<span class="t" style="left:907px;top:462px;color:#7e8294;">.</span>
<span class="t" style="left:916px;top:462px;color:#f89860;">env</span>
<span class="t" style="left:943px;top:462px;color:#7e8294;">.</span>
<span class="t" style="left:952px;top:462px;color:#f89860;">HEAD</span>
<span class="t" style="left:997px;top:462px;color:#ff5f78;">||</span>
<span class="t" style="left:790px;top:480px;color:#5a5e7a;">4</span>
<div class="b" style="left:830px;top:480px;width:1px;height:18px;background:#353b45;"></div>
<span class="t" style="left:844px;top:480px;color:#edc763;">"main"</span>
<span class="t" style="left:898px;top:480px;color:#7e8294;">;</span>
<span class="t" style="left:790px;top:498px;color:#5a5e7a;">3</span>
<span class="t" style="left:790px;top:516px;color:#5a5e7a;">2</span>
<span class="t" style="left:826px;top:516px;color:#ff5f78;">export</span>
<span class="t" style="left:889px;top:516px;color:#ff5f78;">default</span>
<span class="t" style="left:961px;top:516px;color:#9ed06c;">defineConfig</span>
<span class="t" style="left:1069px;top:516px;color:#7e8294;">(</span>
<span class="t" style="left:1078px;top:516px;color:#7e8294;">{</span>
<span class="t" style="left:790px;top:534px;color:#5a5e7a;">1</span>
<div class="b" style="left:830px;top:534px;width:1px;height:18px;background:#6c7186;"></div>
<span class="t" style="left:844px;top:534px;color:#f89860;">branch</span>
<span class="t" style="left:898px;top:534px;color:#7e8294;">,</span>
<div class="b" style="left:826px;top:552px;width:531px;height:18px;background:#34374a;"></div>
<div class="b" style="left:826px;top:552px;width:7px;height:16px;border:1px solid #aab4b8"></div>
<span class="t" style="left:781px;top:552px;color:#e1e3e4;">13</span>
<span class="t" style="left:790px;top:570px;color:#5a5e7a;">1</span>
<div class="b" style="left:830px;top:570px;width:1px;height:18px;background:#6c7186;"></div>
<span class="t" style="left:844px;top:570px;color:#7e8294;font-style:italic;">// Get this from tina.io</span>
<span class="t" style="left:790px;top:588px;color:#5a5e7a;">2</span>
<div class="b" style="left:830px;top:588px;width:1px;height:18px;background:#6c7186;"></div>
<span class="t" style="left:844px;top:588px;color:#f89860;">clientId</span>
<span class="t" style="left:916px;top:588px;color:#7e8294;">:</span>
<span class="t" style="left:934px;top:588px;color:#e1e3e4;">process</span>
<span class="t" style="left:997px;top:588px;color:#7e8294;">.</span>
<span class="t" style="left:1006px;top:588px;color:#f89860;">env</span>
<span class="t" style="left:1033px;top:588px;color:#7e8294;">.</span>
<span class="t" style="left:1042px;top:588px;color:#f89860;">TINA_CLIENT_ID</span>
<span class="t" style="left:1168px;top:588px;color:#7e8294;">,</span>
<span class="t" style="left:790px;top:606px;color:#5a5e7a;">3</span>
<div class="b" style="left:830px;top:606px;width:1px;height:18px;background:#6c7186;"></div>
<span class="t" style="left:844px;top:606px;color:#7e8294;font-style:italic;">// Get this from tina.io</span>
<span class="t" style="left:790px;top:624px;color:#5a5e7a;">4</span>
<div class="b" style="left:830px;top:624px;width:1px;height:18px;background:#6c7186;"></div>
<span class="t" style="left:844px;top:624px;color:#f89860;">token</span>
<span class="t" style="left:889px;top:624px;color:#7e8294;">:</span>
<span class="t" style="left:907px;top:624px;color:#e1e3e4;">process</span>
<span class="t" style="left:970px;top:624px;color:#7e8294;">.</span>
<span class="t" style="left:979px;top:624px;color:#f89860;">env</span>
<span class="t" style="left:1006px;top:624px;color:#7e8294;">.</span>
<span class="t" style="left:1015px;top:624px;color:#f89860;">TINA_TOKEN</span>
<span class="t" style="left:1105px;top:624px;color:#7e8294;">,</span>
<span class="t" style="left:790px;top:642px;color:#5a5e7a;">5</span>
<div class="b" style="left:830px;top:642px;width:1px;height:18px;background:#6c7186;"></div>
<span class="t" style="left:790px;top:660px;color:#5a5e7a;">6</span>
<div class="b" style="left:830px;top:660px;width:1px;height:18px;background:#6c7186;"></div>
<span class="t" style="left:844px;top:660px;color:#f89860;">build</span>
<span class="t" style="left:889px;top:660px;color:#7e8294;">:</span>
<span class="t" style="left:907px;top:660px;color:#7e8294;">{</span>
<span class="t" style="left:790px;top:678px;color:#5a5e7a;">7</span>
<div class="b" style="left:830px;top:678px;width:1px;height:18px;background:#6c7186;"></div>
<div class="b" style="left:848px;top:678px;width:1px;height:18px;background:#353b45;"></div>
<span class="t" style="left:862px;top:678px;color:#f89860;">outputFolder</span>
<span class="t" style="left:970px;top:678px;color:#7e8294;">:</span>
<span class="t" style="left:988px;top:678px;color:#edc763;">"admin"</span>
<span class="t" style="left:1051px;top:678px;color:#7e8294;">,</span>
<span class="t" style="left:790px;top:696px;color:#5a5e7a;">8</span>
<div class="b" style="left:830px;top:696px;width:1px;height:18px;background:#6c7186;"></div>
<div class="b" style="left:848px;top:696px;width:1px;height:18px;background:#353b45;"></div>
<span class="t" style="left:862px;top:696px;color:#f89860;">publicFolder</span>
<span class="t" style="left:970px;top:696px;color:#7e8294;">:</span>
<span class="t" style="left:988px;top:696px;color:#edc763;">"public"</span>
<span class="t" style="left:1060px;top:696px;color:#7e8294;">,</span>
<span class="t" style="left:790px;top:714px;color:#5a5e7a;">9</span>
<div class="b" style="left:830px;top:714px;width:1px;height:18px;background:#6c7186;"></div>
<span class="t" style="left:844px;top:714px;color:#7e8294;">}</span>
<span class="t" style="left:853px;top:714px;color:#7e8294;">,</span>
<div class="b" style="left:754px;top:732px;width:72px;height:18px;background:#78d0e8;"></div>
<div class="b" style="left:826px;top:732px;width:81px;height:18px;background:#3f445b;"></div>
<div class="b" style="left:907px;top:732px;width:252px;height:18px;background:#333648;"></div>
<div class="b" style="left:1150px;top:732px;width:126px;height:18px;background:#3f445b;"></div>
<div class="b" style="left:1276px;top:732px;width:81px;height:18px;background:#78d0e8;"></div>
<svg class="b" style="left:826px;top:732px" width="9" height="18" viewBox="0 0 9 18"><polygon points="0,0 9,9 0,18" fill="#78d0e8"/></svg>
<div class="b" style="left:907px;top:732px;width:9px;height:18px;background:#333648;"></div>
<svg class="b" style="left:907px;top:732px" width="9" height="18" viewBox="0 0 9 18"><polygon points="0,0 9,9 0,18" fill="#3f445b"/></svg>
<div class="b" style="left:1150px;top:732px;width:9px;height:18px;background:#333648;"></div>
<svg class="b" style="left:1150px;top:732px" width="9" height="18" viewBox="0 0 9 18"><polygon points="9,0 0,9 9,18" fill="#3f445b"/></svg>
<svg class="b" style="left:1267px;top:732px" width="9" height="18" viewBox="0 0 9 18"><polygon points="9,0 0,9 9,18" fill="#78d0e8"/></svg>
<span class="t" style="left:763px;top:732px;color:#2b2d3a;font-weight:bold;">NORMAL</span>
<svg class="b" style="left:844px;top:732px" width="10" height="18" viewBox="0 0 10 18" fill="none" stroke="#e1e3e4"><path d="M3 1v8.200" stroke-width="2"/><path d="M3 16.500v-2.500c0-2.500 3.600-2.800 3.600-5.500v-4" stroke-width="1.700"/><path d="M4.300 5.200l2.300-2.700 2.300 2.700z" fill="#e1e3e4" stroke="none"/></svg>
<span class="t" style="left:862px;top:732px;color:#e1e3e4;">main</span>
<span class="t" style="left:916px;top:732px;color:#e1e3e4;">&lt;ina/config.ts</span>
<span class="t" style="left:1060px;top:732px;color:#ff5f78;">^E</span>
<svg class="b" style="left:1087px;top:732px" width="9" height="18" viewBox="0 0 9 18"><path d="M8.5 1L1 9l7.500 8" fill="none" stroke="#e1e3e4" stroke-width="1"/></svg>
<svg class="b" style="left:1104px;top:736px" width="11" height="10" viewBox="0 0 11 10" fill="none" stroke="#bb97ee" stroke-width=".9"><path d="M1 2.5l4.500-1.700 4.500 1.700v5l-4.500 1.700-4.500-1.700zM1 2.500l4.500 1.700 4.500-1.700M5.500 4.200v5"/></svg>
<span class="t" style="left:1123px;top:732px;color:#bb97ee;">22</span>
<span class="t" style="left:1168px;top:732px;color:#e1e3e4;">12%</span>
<span class="t" style="left:1213px;top:732px;color:#e1e3e4;">13:1</span>
<svg class="b" style="left:1285px;top:734px" width="12" height="14" viewBox="0 0 12 14" fill="none" stroke="#2b2d3a" stroke-linecap="round"><path d="M3.500 11.800A4.600 4.200 0 1 1 8.300 11.800" stroke-width="1.500"/><path d="M7.400 3.400l1.900-2.100" stroke-width="1.400"/></svg>
<span class="t" style="left:1303px;top:732px;color:#2b2d3a;font-weight:bold;">21:13</span>
</body></html>
